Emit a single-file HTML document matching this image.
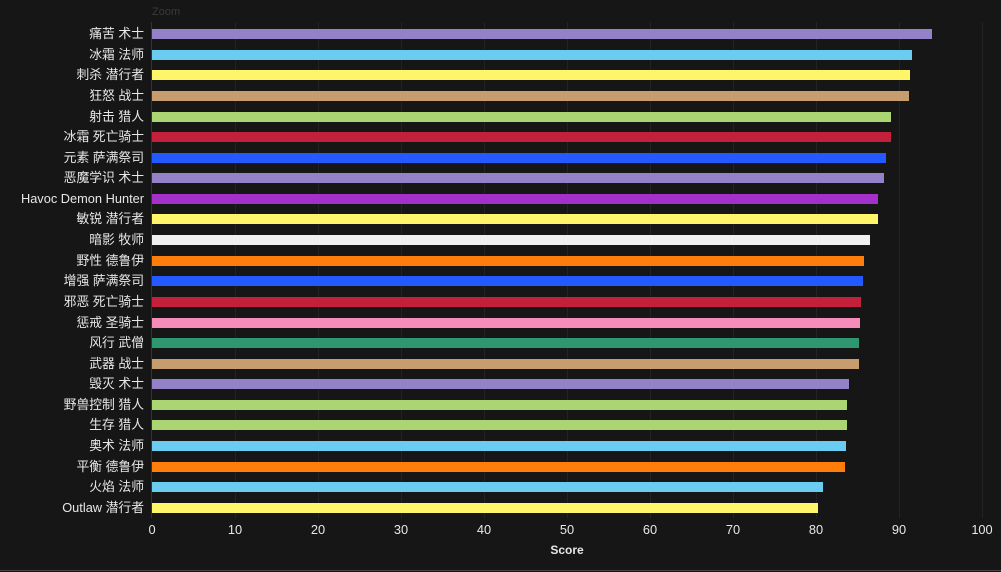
<!DOCTYPE html>
<html><head><meta charset="utf-8"><style>
html,body{margin:0;padding:0;background:#161616;width:1001px;height:572px;overflow:hidden}
svg text{font-family:"Liberation Sans","Noto Sans CJK SC",sans-serif}
</style></head><body>
<svg width="1001" height="572" xmlns="http://www.w3.org/2000/svg">
<rect width="1001" height="572" fill="#161616"/>
<text x="152" y="15" font-size="11" fill="#3a3a3a">Zoom</text>
<g stroke="#232323" stroke-width="1">
<line x1="235.5" y1="22" x2="235.5" y2="518"/><line x1="318.5" y1="22" x2="318.5" y2="518"/>
<line x1="401.5" y1="22" x2="401.5" y2="518"/><line x1="484.5" y1="22" x2="484.5" y2="518"/>
<line x1="567.5" y1="22" x2="567.5" y2="518"/><line x1="650.5" y1="22" x2="650.5" y2="518"/>
<line x1="733.5" y1="22" x2="733.5" y2="518"/><line x1="816.5" y1="22" x2="816.5" y2="518"/>
<line x1="899.5" y1="22" x2="899.5" y2="518"/><line x1="982.5" y1="22" x2="982.5" y2="518"/>
</g>
<line x1="151.5" y1="22" x2="151.5" y2="518" stroke="#333"/>
<g>
<rect x="152" y="29" width="780" height="10" fill="#9482C9"/>
<rect x="152" y="50" width="760" height="10" fill="#69CCF0"/>
<rect x="152" y="70" width="758" height="10" fill="#FFF569"/>
<rect x="152" y="91" width="757" height="10" fill="#C79C6E"/>
<rect x="152" y="112" width="739" height="10" fill="#ABD473"/>
<rect x="152" y="132" width="739" height="10" fill="#C41F3B"/>
<rect x="152" y="153" width="734" height="10" fill="#2459FF"/>
<rect x="152" y="173" width="732" height="10" fill="#9482C9"/>
<rect x="152" y="194" width="726" height="10" fill="#A330C9"/>
<rect x="152" y="214" width="726" height="10" fill="#FFF569"/>
<rect x="152" y="235" width="718" height="10" fill="#F0F0F0"/>
<rect x="152" y="256" width="712" height="10" fill="#FF7D0A"/>
<rect x="152" y="276" width="711" height="10" fill="#2459FF"/>
<rect x="152" y="297" width="709" height="10" fill="#C41F3B"/>
<rect x="152" y="318" width="708" height="10" fill="#F58CBA"/>
<rect x="152" y="338" width="707" height="10" fill="#2E9770"/>
<rect x="152" y="359" width="707" height="10" fill="#C79C6E"/>
<rect x="152" y="379" width="697" height="10" fill="#9482C9"/>
<rect x="152" y="400" width="695" height="10" fill="#ABD473"/>
<rect x="152" y="420" width="695" height="10" fill="#ABD473"/>
<rect x="152" y="441" width="694" height="10" fill="#69CCF0"/>
<rect x="152" y="462" width="693" height="10" fill="#FF7D0A"/>
<rect x="152" y="482" width="671" height="10" fill="#69CCF0"/>
<rect x="152" y="503" width="666" height="10" fill="#FFF569"/>
</g>
<g font-size="12.8" fill="#e8e8e8" text-anchor="end">
<text x="144" y="38">痛苦 术士</text>
<text x="144" y="59">冰霜 法师</text>
<text x="144" y="79">刺杀 潜行者</text>
<text x="144" y="100">狂怒 战士</text>
<text x="144" y="121">射击 猎人</text>
<text x="144" y="141">冰霜 死亡骑士</text>
<text x="144" y="162">元素 萨满祭司</text>
<text x="144" y="182">恶魔学识 术士</text>
<text x="144" y="203">Havoc Demon Hunter</text>
<text x="144" y="223">敏锐 潜行者</text>
<text x="144" y="244">暗影 牧师</text>
<text x="144" y="265">野性 德鲁伊</text>
<text x="144" y="285">增强 萨满祭司</text>
<text x="144" y="306">邪恶 死亡骑士</text>
<text x="144" y="327">惩戒 圣骑士</text>
<text x="144" y="347">风行 武僧</text>
<text x="144" y="368">武器 战士</text>
<text x="144" y="388">毁灭 术士</text>
<text x="144" y="409">野兽控制 猎人</text>
<text x="144" y="429">生存 猎人</text>
<text x="144" y="450">奥术 法师</text>
<text x="144" y="471">平衡 德鲁伊</text>
<text x="144" y="491">火焰 法师</text>
<text x="144" y="512">Outlaw 潜行者</text>
</g>
<g font-size="12.8" fill="#e8e8e8" text-anchor="middle">
<text x="152" y="534">0</text><text x="235" y="534">10</text><text x="318" y="534">20</text>
<text x="401" y="534">30</text><text x="484" y="534">40</text><text x="567" y="534">50</text>
<text x="650" y="534">60</text><text x="733" y="534">70</text><text x="816" y="534">80</text>
<text x="899" y="534">90</text><text x="982" y="534">100</text>
<text x="567" y="554" font-weight="bold" font-size="12">Score</text>
</g>
<line x1="0" y1="570.5" x2="1001" y2="570.5" stroke="#444"/>
</svg>
</body></html>
